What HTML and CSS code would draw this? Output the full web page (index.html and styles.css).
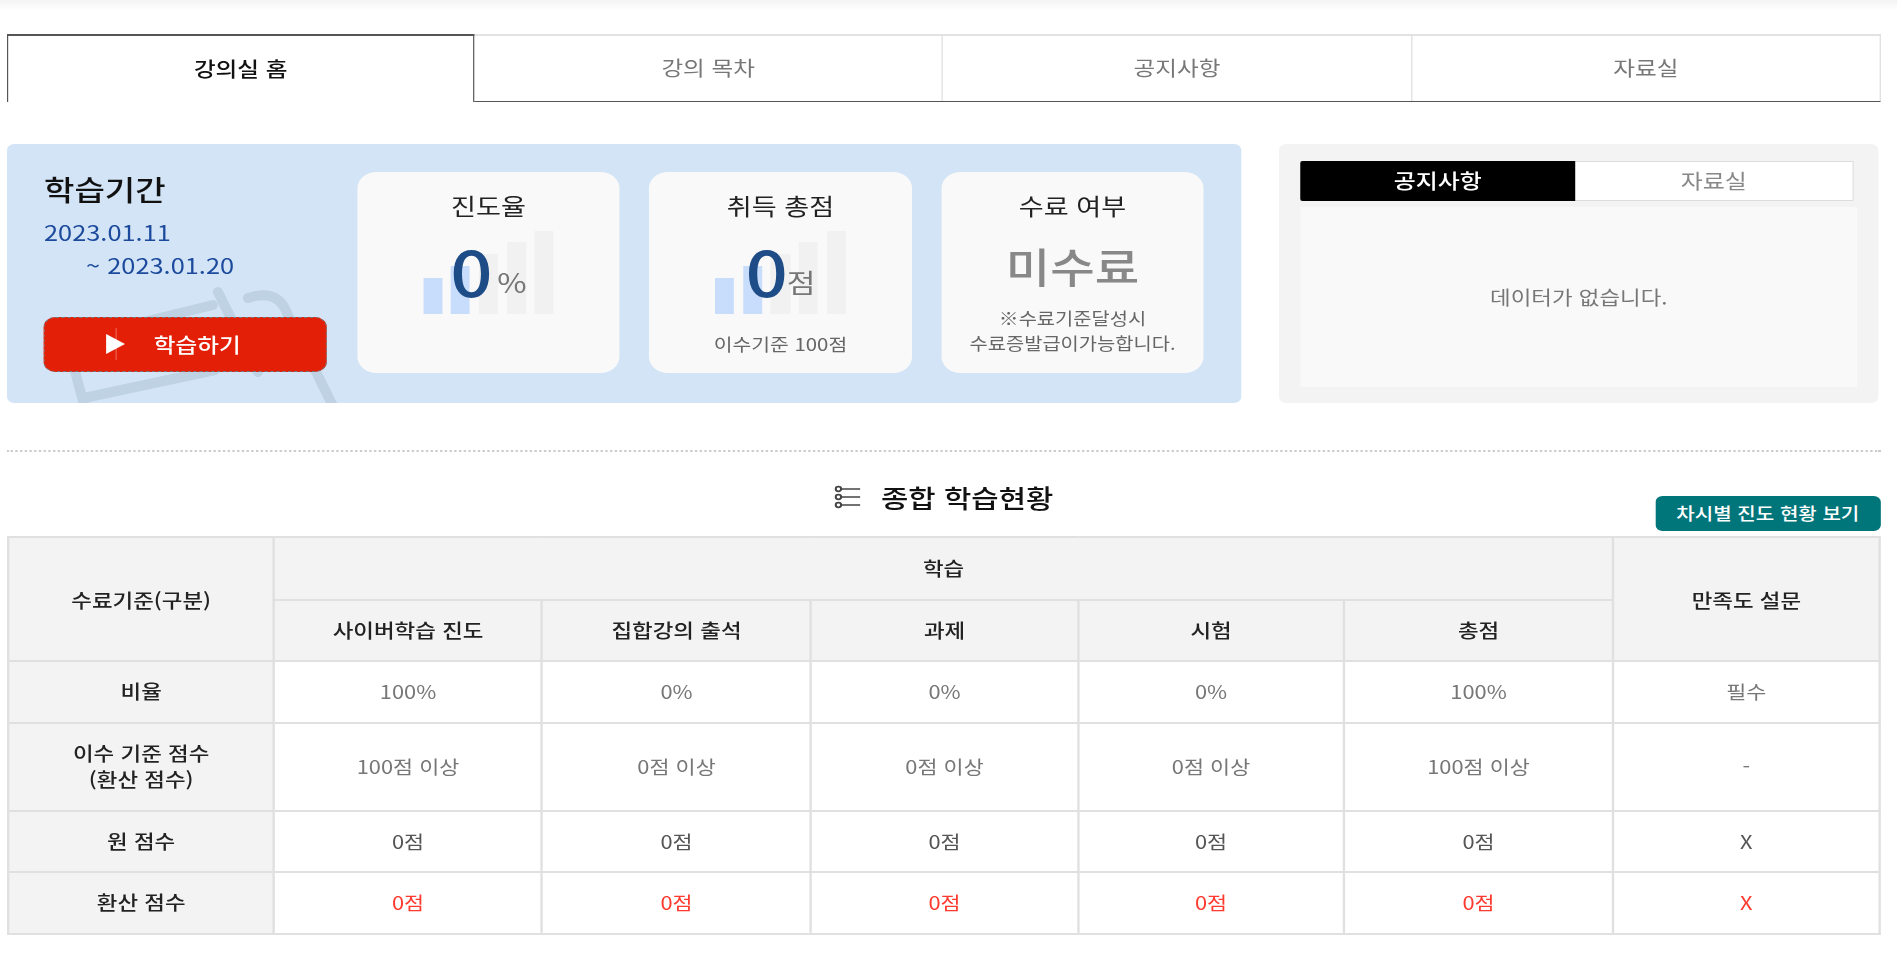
FILE: index.html
```html
<!DOCTYPE html>
<html lang="ko">

<head>
  <meta charset="UTF-8" />
  <meta name="viewport" content="width=device-width, initial-scale=1.0" />
  <title>강의실 홈</title>
  <link rel="stylesheet" href="styles.css">
</head>

<body>
  <div class="top-shade"></div>

  <div class="wrap">
    <ul class="main-tabs">
      <li class="on">강의실 홈</li>
      <li>강의 목차</li>
      <li>공지사항</li>
      <li>자료실</li>
    </ul>

    <div class="hero">
      <div class="study-box">
        <svg class="study-bg" viewBox="7 144 340 259" preserveAspectRatio="none" fill="none" stroke="#bfd2e3" stroke-width="10" stroke-linecap="round">
          <path d="M218 292 L258 372" />
          <path d="M213 305 L67 341 L88 420" />
          <path d="M84 398 L215 370" />
          <path d="M248 298 C270 291 282 298 288 315 L345 430" />
        </svg>
        <div class="period">
          <h2>학습기간</h2>
          <p class="date">2023.01.11</p>
          <p class="date date-end">~ 2023.01.20</p>
          <a class="study-btn"><span class="play"></span>학습하기</a>
        </div>
        <div class="card">
          <h3>진도율</h3>
          <div class="score">
            <div class="bars"><i class="fill b1"></i><i class="fill b2"></i><i class="b3"></i><i class="b4"></i><i class="b5"></i></div>
            <b>0</b><span class="unit-pct">%</span>
          </div>
        </div>
        <div class="card">
          <h3>취득 총점</h3>
          <div class="score">
            <div class="bars"><i class="fill b1"></i><i class="fill b2"></i><i class="b3"></i><i class="b4"></i><i class="b5"></i></div>
            <b>0</b><span class="unit">점</span>
          </div>
          <p class="card-note">이수기준 100점</p>
        </div>
        <div class="card">
          <h3>수료 여부</h3>
          <div class="finish">미수료</div>
          <p class="card-small">※수료기준달성시<br>수료증발급이가능합니다.</p>
        </div>
      </div>

      <div class="notice-box">
        <ul class="notice-tabs">
          <li class="on">공지사항</li>
          <li>자료실</li>
        </ul>
        <div class="notice-empty">데이터가 없습니다.</div>
      </div>
    </div>

    <div class="section-head">
      <h2>
        <svg width="23" height="24" viewBox="0 0 23 24" fill="none" stroke="#444" stroke-width="1.7">
          <circle cx="3.6" cy="4" r="2.3" />
          <circle cx="3.6" cy="12" r="2.3" />
          <circle cx="3.6" cy="20" r="2.3" />
          <path d="M6 4H22M6 12H22M6 20H22" />
        </svg>
        종합 학습현황
      </h2>
      <a class="round-btn">차시별 진도 현황 보기</a>
    </div>

    <table class="status-table">
      <colgroup>
        <col class="c-first">
        <col class="c-second">
        <col class="c-a">
        <col class="c-b">
        <col class="c-c">
        <col class="c-a">
        <col>
      </colgroup>
      <thead>
        <tr class="r1">
          <th class="th-span" rowspan="2">수료기준(구분)</th>
          <th colspan="5">학습</th>
          <th class="th-span" rowspan="2">만족도 설문</th>
        </tr>
        <tr class="r2">
          <th>사이버학습 진도</th>
          <th>집합강의 출석</th>
          <th>과제</th>
          <th>시험</th>
          <th>총점</th>
        </tr>
      </thead>
      <tbody>
        <tr class="r3">
          <th>비율</th>
          <td>100%</td>
          <td>0%</td>
          <td>0%</td>
          <td>0%</td>
          <td>100%</td>
          <td>필수</td>
        </tr>
        <tr class="r4">
          <th>이수 기준 점수<br>(환산 점수)</th>
          <td>100점 이상</td>
          <td>0점 이상</td>
          <td>0점 이상</td>
          <td>0점 이상</td>
          <td>100점 이상</td>
          <td>-</td>
        </tr>
        <tr class="r5 dark">
          <th>원 점수</th>
          <td>0점</td>
          <td>0점</td>
          <td>0점</td>
          <td>0점</td>
          <td>0점</td>
          <td>X</td>
        </tr>
        <tr class="r6 red">
          <th>환산 점수</th>
          <td>0점</td>
          <td>0점</td>
          <td>0점</td>
          <td>0점</td>
          <td>0점</td>
          <td>X</td>
        </tr>
      </tbody>
    </table>
  </div>
</body>
</html>
```

FILE: styles.css
```css
* {
  box-sizing: border-box;
  font-family: "Noto Sans CJK KR", "Noto Sans", sans-serif;
  margin: 0;
  padding: 0;
}

body {
  background-color: #fff;
  color: #222;
  height: 975px;
  overflow: hidden;
}

ul {
  list-style: none;
}

.top-shade {
  height: 10px;
  background: linear-gradient(#f3f3f3, #fff);
}

/* the whole page is stretched sideways, all widths below are before the stretch */
.wrap {
  width: 1588px;
  margin-left: 7px;
  transform: scaleX(1.18);
  transform-origin: 0 0;
}

/* main tabs */
.main-tabs {
  display: flex;
  height: 68px;
  margin-top: 24px;
  border-top: 2px solid #e2e2e2;
  border-right: 1px solid #ddd;
  border-bottom: 1px solid #555;
}

.main-tabs li {
  flex: 1;
  display: flex;
  align-items: center;
  justify-content: center;
  padding-bottom: 2px;
  font-size: 20px;
  color: #777;
  border-left: 1px solid #ddd;
}

.main-tabs li.on {
  flex: none;
  width: 396px;
  height: 68px;
  margin-top: -2px;
  background-color: #fff;
  color: #111;
  font-weight: 500;
  border: 1px solid #555;
  border-bottom: none;
  border-top-width: 2px;
}

.main-tabs li.on + li {
  border-left: none;
}

/* hero */
.hero {
  display: flex;
  justify-content: space-between;
  margin-top: 42px;
  height: 259px;
}

.study-box {
  position: relative;
  overflow: hidden;
  display: flex;
  gap: 24.6px;
  width: 1045.8px;
  padding: 28px 31.4px 30px 31.4px;
  background-color: #d2e4f5;
  border-radius: 6px;
}

.study-bg {
  position: absolute;
  left: 0;
  top: 0;
  width: 288px;
  height: 259px;
}

.period {
  position: relative;
  width: 240.7px;
  margin-top: -1px;
}

.period h2 {
  font-size: 28px;
  font-weight: 500;
  line-height: 36px;
  color: #111;
}

.date {
  font-size: 21.5px;
  line-height: 33px;
  color: #1c4a9c;
}

.period h2 + .date {
  margin-top: 8px;
}

.date-end {
  padding-left: 35.6px;
}

.study-btn {
  display: flex;
  align-items: center;
  justify-content: flex-start;
  gap: 24px;
  width: 239.8px;
  height: 55px;
  margin-top: 36px;
  padding-left: 53px;
  padding-bottom: 1px;
  background-color: #e31f07;
  outline: 1px dashed #777;
  outline-offset: -1px;
  border-radius: 10px;
  color: #fff;
  font-size: 20px;
  font-weight: 500;
}

.play {
  position: relative;
  width: 0;
  height: 0;
  border-left: 16px solid #fff;
  border-top: 10px solid transparent;
  border-bottom: 10px solid transparent;
}

.play::before {
  content: "";
  position: absolute;
  left: -8px;
  top: -16px;
  width: 1px;
  height: 32px;
  background-color: rgba(255, 255, 255, 0.3);
}

.card {
  flex: none;
  width: 222.9px;
  background-color: #f9f9f9;
  border-radius: 16px;
  text-align: center;
  padding-top: 15px;
}

.card h3 {
  font-size: 23px;
  font-weight: 400;
  line-height: 36px;
  color: #222;
}

.score {
  position: relative;
  height: 84px;
  margin-top: 7px;
  display: flex;
  justify-content: center;
  align-items: flex-end;
  color: #777;
}

.bars {
  position: absolute;
  left: 56px;
  bottom: 0;
  display: flex;
  align-items: flex-end;
  gap: 7.6px;
}

.bars i {
  display: block;
  width: 16.1px;
  background-color: #f1f1f1;
}

.bars i.fill {
  background-color: #c8dcfb;
}

.b1 { height: 36px; }
.b2 { height: 48px; }
.b3 { height: 60px; }
.b4 { height: 72px; }
.b5 { height: 83px; }

.score b {
  position: relative;
  font-size: 63px;
  font-weight: 500;
  line-height: 68px;
  color: #1d4c86;
  margin-bottom: 10px;
}

.unit-pct,
.unit {
  position: relative;
  font-size: 27px;
  line-height: 36px;
  margin-bottom: 14px;
  margin-left: 4px;
}

.unit {
  margin-left: -1px;
  font-size: 26.5px;
}

.card-note {
  font-size: 17.3px;
  line-height: 26px;
  margin-top: 17px;
  color: #666;
}

.finish {
  font-size: 41px;
  font-weight: 500;
  line-height: 58px;
  margin-top: 13px;
  color: #888;
}

.card-small {
  font-size: 16.8px;
  line-height: 25px;
  margin-top: 12px;
  color: #666;
}

/* notice */
.notice-box {
  width: 508.5px;
  margin-right: 1.7px;
  padding: 17px 18.6px;
  background-color: #f3f3f3;
  border-radius: 6px;
}

.notice-tabs {
  display: flex;
  width: 469px;
  height: 40px;
  background-color: #fff;
  border: 1px solid #ddd;
}

.notice-tabs li {
  flex: 1;
  display: flex;
  align-items: center;
  justify-content: center;
  padding-bottom: 2px;
  font-size: 20.3px;
  color: #888;
}

.notice-tabs li.on {
  flex: none;
  width: 232.2px;
  margin: -1px 0 -1px -1px;
  background-color: #000;
  color: #fff;
  font-weight: 500;
  border-radius: 2px 0 0 2px;
}

.notice-empty {
  display: flex;
  align-items: center;
  justify-content: center;
  height: 180px;
  margin-top: 6px;
  padding-bottom: 2px;
  background-color: #f9f9f9;
  font-size: 19px;
  color: #777;
}

/* summary */
.section-head {
  position: relative;
  height: 86px;
  margin-top: 47px;
  border-top: 2px dotted #ccc;
  text-align: center;
}

.section-head h2 {
  display: inline-flex;
  align-items: center;
  gap: 16.4px;
  margin-top: 25px;
  font-size: 25.2px;
  font-weight: 500;
  line-height: 40px;
  color: #111;
}

.round-btn {
  position: absolute;
  right: 0;
  top: 44px;
  width: 191.5px;
  height: 35px;
  line-height: 34px;
  background-color: #00757a;
  border-radius: 6px;
  color: #fff;
  font-size: 17px;
  font-weight: 500;
  text-align: center;
}

.status-table {
  width: 1588px;
  table-layout: fixed;
  border-collapse: collapse;
  border: 2px solid #e0e0e0;
  font-size: 18.5px;
  text-align: center;
}

.c-first { width: 225.4px; }
.c-second { width: 227px; }
.c-a { width: 228px; }
.c-b { width: 226.3px; }
.c-c { width: 225.4px; }

.status-table th,
.status-table td {
  border: 2px solid #e0e0e0;
  padding-bottom: 2px;
}

.status-table th {
  background-color: #f3f3f3;
  font-size: 19px;
  font-weight: 500;
  color: #222;
  line-height: 26px;
}

.status-table .th-span {
  padding: 2px 0 0;
}

.status-table td {
  color: #777;
}

.r1 { height: 63px; }
.r2 { height: 61px; }
.r3 { height: 62px; }
.r4 { height: 88px; }
.r5 { height: 61px; }
.r6 { height: 62px; }

.dark td {
  color: #555;
}

.red td {
  color: #ff3b30;
}
```
